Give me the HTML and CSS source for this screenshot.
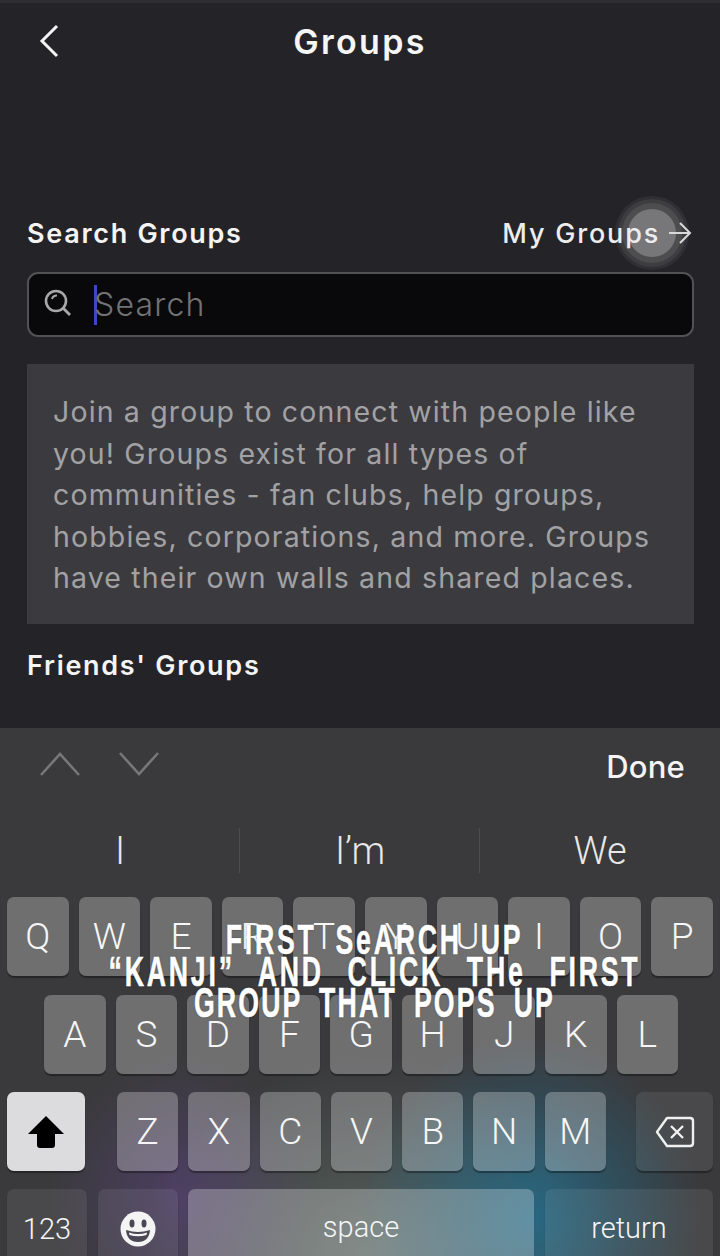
FILE: index.html
```html
<!DOCTYPE html>
<html lang="en">
<head>
<meta charset="utf-8">
<title>Groups</title>
<link rel="stylesheet" href="styles.css">
</head>
<body>
<div class="page">
  <header class="nav">
    <svg class="back" width="24" height="36" viewBox="0 0 24 36"><path d="M19 3 L4 18 L19 33" fill="none" stroke="#f4f4f4" stroke-width="3"/></svg>
    <h1 class="title">Groups</h1>
  </header>
  <main class="content">
    <div class="section-head">
      <h2 class="section-title">Search Groups</h2>
      <div class="my-groups">
        <span class="touch"></span>
        <span class="my-label">My Groups</span>
        <svg class="arrow" width="24" height="24" viewBox="0 0 24 24"><path d="M1 12 H22 M12 2 L22 12 L12 22" fill="none" stroke="#d8d8d8" stroke-width="2"/></svg>
      </div>
    </div>
    <div class="search">
      <svg class="search-icon" width="30" height="30" viewBox="0 0 30 30"><circle cx="13" cy="13" r="10" fill="none" stroke="#a8a8aa" stroke-width="2.6"/><path d="M9 11 A5 5 0 0 1 14 7.500" fill="none" stroke="#a8a8aa" stroke-width="2"/><path d="M20 20 L27 27" stroke="#a8a8aa" stroke-width="2.800"/></svg>
      <span class="caret"></span>
      <span class="placeholder">Search</span>
    </div>
    <p class="info">Join a group to connect with people like you! Groups exist for all types of communities - fan clubs, help groups, hobbies, corporations, and more. Groups have their own walls and shared places.</p>
    <h2 class="section-title friends">Friends' Groups</h2>
  </main>
  <section class="keyboard">
    <div class="toolbar">
      <div class="arrows">
        <svg width="42" height="26" viewBox="0 0 42 26"><path d="M2 24 L21 3 L40 24" fill="none" stroke="#777779" stroke-width="2.600"/></svg>
        <svg width="42" height="26" viewBox="0 0 42 26"><path d="M2 2 L21 23 L40 2" fill="none" stroke="#777779" stroke-width="2.600"/></svg>
      </div>
      <span class="done">Done</span>
    </div>
    <div class="suggestions">
      <span class="suggestion">I</span>
      <span class="suggestion">I’m</span>
      <span class="suggestion">We</span>
    </div>
    <div class="row row-1">
      <div class="key">Q</div><div class="key">W</div><div class="key">E</div><div class="key">R</div><div class="key">T</div><div class="key">Y</div><div class="key">U</div><div class="key">I</div><div class="key">O</div><div class="key">P</div>
    </div>
    <div class="row row-2">
      <div class="key">A</div><div class="key">S</div><div class="key">D</div><div class="key">F</div><div class="key">G</div><div class="key">H</div><div class="key">J</div><div class="key">K</div><div class="key">L</div>
    </div>
    <div class="row row-3">
      <div class="key key-shift">
        <svg width="38" height="34" viewBox="0 0 38 34"><path d="M19 1 L37 19 H28 V30 Q28 33 25 33 H13 Q10 33 10 30 V19 H1 Z" fill="#000"/></svg>
      </div>
      <div class="letters">
        <div class="key">Z</div><div class="key">X</div><div class="key">C</div><div class="key">V</div><div class="key">B</div><div class="key">N</div><div class="key">M</div>
      </div>
      <div class="key key-del">
        <svg width="40" height="32" viewBox="0 0 40 32"><path d="M12 2 H35 Q38 2 38 5 V27 Q38 30 35 30 H12 L2 16 Z" fill="none" stroke="#f0f0f0" stroke-width="2.400" stroke-linejoin="round"/><path d="M16 10 L28 22 M28 10 L16 22" stroke="#f0f0f0" stroke-width="2.400"/></svg>
      </div>
    </div>
    <div class="row row-4">
      <div class="key key-fn key-num">123</div>
      <div class="key key-fn key-emoji">
        <svg width="36" height="36" viewBox="0 0 36 36"><ellipse cx="18" cy="18" rx="17.500" ry="17.500" fill="#f4f4f4"/><ellipse cx="12" cy="12.500" rx="2.500" ry="4" fill="#4a4654"/><ellipse cx="24" cy="12.500" rx="2.500" ry="4" fill="#4a4654"/><path d="M6 19 Q18 23 30 19 Q29 31 18 31 Q7 31 6 19 Z" fill="#4a4654"/><path d="M9 21.500 Q18 24.500 27 21.500 L26.500 24 Q18 26.500 9.500 24 Z" fill="#f4f4f4"/></svg>
      </div>
      <div class="key key-space">space</div>
      <div class="key key-fn key-return">return</div>
    </div>
    <div class="caption">
      <div>FIRST SeARCH UP</div>
      <div class="caption-wide">“KANJI” AND CLICK THe FIRST</div>
      <div class="caption-tight">GROUP THAT POPS UP</div>
    </div>
  </section>
</div>
</body>
</html>
```

FILE: styles.css
```css
* { box-sizing: border-box; }
html, body { margin: 0; height: 100%; }
body { background: #242428; overflow: hidden; }

.page {
  width: 720px;
  height: 1256px;
  display: flex;
  flex-direction: column;
  overflow: hidden;
  background: #242428;
  font-family: Inter, "Liberation Sans", sans-serif;
  color: #fff;
  border-top: 3px solid #2f2f33;
}

.nav {
  position: relative;
  height: 77px;
  display: flex;
  align-items: center;
  justify-content: center;
  flex: none;
}
.back { position: absolute; left: 38px; top: 20px; }
.title {
  margin: 0;
  font-size: 34px;
  font-weight: 600;
  letter-spacing: 2.3px;
  line-height: 77px;
  color: #f6f6f6;
}

.content {
  flex: none;
  height: 648px;
  padding: 0 26px 0 27px;
  display: flex;
  flex-direction: column;
}
.section-head {
  margin-top: 132px;
  height: 42px;
  display: flex;
  justify-content: space-between;
  align-items: center;
}
.section-title {
  margin: 0;
  font-size: 27px;
  font-weight: 600;
  letter-spacing: 1.7px;
  color: #f4f4f4;
}
.my-groups {
  position: relative;
  display: flex;
  align-items: center;
  gap: 8px;
  margin-right: 2px;
  font-size: 27px;
  font-weight: 500;
  letter-spacing: 1.8px;
  color: #ededed;
}
.my-label, .arrow { position: relative; }
.touch {
  position: absolute;
  right: 16px;
  top: 50%;
  width: 48px;
  height: 48px;
  margin-top: -24px;
  border-radius: 50%;
  background: #77777a;
  box-shadow: 0 0 0 6px #4d4d50, 0 0 0 10px #3d3d40, 0 0 0 13px #303034;
}

.search {
  margin-top: 18px;
  height: 65px;
  display: flex;
  align-items: center;
  background: #09090b;
  border: 2px solid #525255;
  border-radius: 11px;
  padding-left: 14px;
  flex: none;
  position: relative;
}
.search-icon { margin-top: -3px; }
.caret {
  width: 3px;
  height: 40px;
  background: #3a48c8;
  margin-left: 21px;
  flex: none;
}
.placeholder {
  font-size: 32px;
  font-weight: 300;
  color: #737375;
  letter-spacing: 1.200px;
  margin-left: -3px;
}
.info {
  margin: 27px 0 0;
  height: 260px;
  flex: none;
  background: #3b3b3f;
  padding: 27px 26px 0;
  font-size: 28.5px;
  line-height: 41.6px;
  letter-spacing: 1.15px;
  color: #a2a2a5;
}
.friends { margin-top: 25px; }

.keyboard {
  position: relative;
  flex: 1;
  padding: 0 7px;
  background:
    radial-gradient(ellipse 130px 140px at 180px 470px, rgba(92, 66, 130, 0.55) 0, rgba(92, 66, 130, 0) 100%),
    radial-gradient(ellipse 170px 180px at 530px 490px, rgba(30, 115, 150, 0.75) 0, rgba(30, 115, 150, 0) 100%),
    radial-gradient(ellipse 240px 200px at 380px 530px, rgba(110, 130, 120, 0.55) 0, rgba(110, 130, 120, 0) 100%),
    #3a3a3c;
}
.toolbar {
  height: 76px;
  display: flex;
  align-items: center;
  justify-content: space-between;
  padding: 0 28px 0 32px;
}
.arrows { display: flex; gap: 37px; margin-top: -4px; }
.done {
  font-size: 31px;
  font-weight: 500;
  letter-spacing: 0.2px;
  color: #f4f4f4;
}
.suggestions {
  height: 93px;
  display: flex;
  margin: 0 -7px;
}
.suggestion {
  flex: 1;
  display: flex;
  align-items: center;
  justify-content: center;
  font-family: Roboto, "Liberation Sans", sans-serif;
  font-size: 38px;
  font-weight: 300;
  color: #e8e8e8;
  position: relative;
}
.suggestion + .suggestion::before {
  content: "";
  position: absolute;
  left: -1px;
  top: 24px;
  height: 45px;
  width: 1px;
  background: #4c4c4e;
}

.row {
  display: flex;
  gap: 10px;
  height: 79px;
  margin-bottom: 18px;
}
.row-1 { margin-bottom: 19px; }
.row-2 { padding: 0 35px 0 37px; }
.key {
  flex: 1 1 0;
  display: flex;
  align-items: center;
  justify-content: center;
  min-width: 0;
  background: rgba(255, 255, 255, 0.27);
  border-radius: 7px;
  box-shadow: 0 2px 1px rgba(0, 0, 0, 0.35);
  font-family: Roboto, "Liberation Sans", sans-serif;
  font-size: 37px;
  font-weight: 300;
  color: #f6f6f6;
}
.row-3 { justify-content: space-between; gap: 0; }
.key-shift {
  flex: 0 0 78px;
  background: #dcdcde;
}
.letters {
  flex: 0 0 489px;
  display: flex;
  gap: 10px;
  margin-left: 2px;
}
.key-del {
  flex: 0 0 77px;
  background: rgba(255, 255, 255, 0.08);
}
.row-4 { gap: 11px; }
.key-fn { background: rgba(255, 255, 255, 0.08); }
.key-num { flex: 0 0 80px; font-size: 29px; }
.key-emoji { flex: 0 0 80px; }
.key-space { flex: 0 0 346px; font-size: 29px; margin-left: -1px; padding-bottom: 3px; }
.key-return { flex: 0 0 168px; font-size: 29px; padding-bottom: 1px; }

.caption {
  position: absolute;
  left: -200px;
  right: -229px;
  top: 196px;
  text-align: center;
  white-space: nowrap;
  font-family: "Liberation Sans", sans-serif;
  font-size: 43px;
  font-weight: 700;
  line-height: 31.5px;
  letter-spacing: 4.5px;
  word-spacing: 14px;
  color: #fff;
  -webkit-text-stroke: 0.6px #fff;
  text-shadow: 0 0 2px rgba(0, 0, 0, 0.5);
  transform: scaleX(0.62);
}
.caption-wide { word-spacing: 22px; }
.caption-tight { letter-spacing: 3.5px; word-spacing: 12px; }
```
